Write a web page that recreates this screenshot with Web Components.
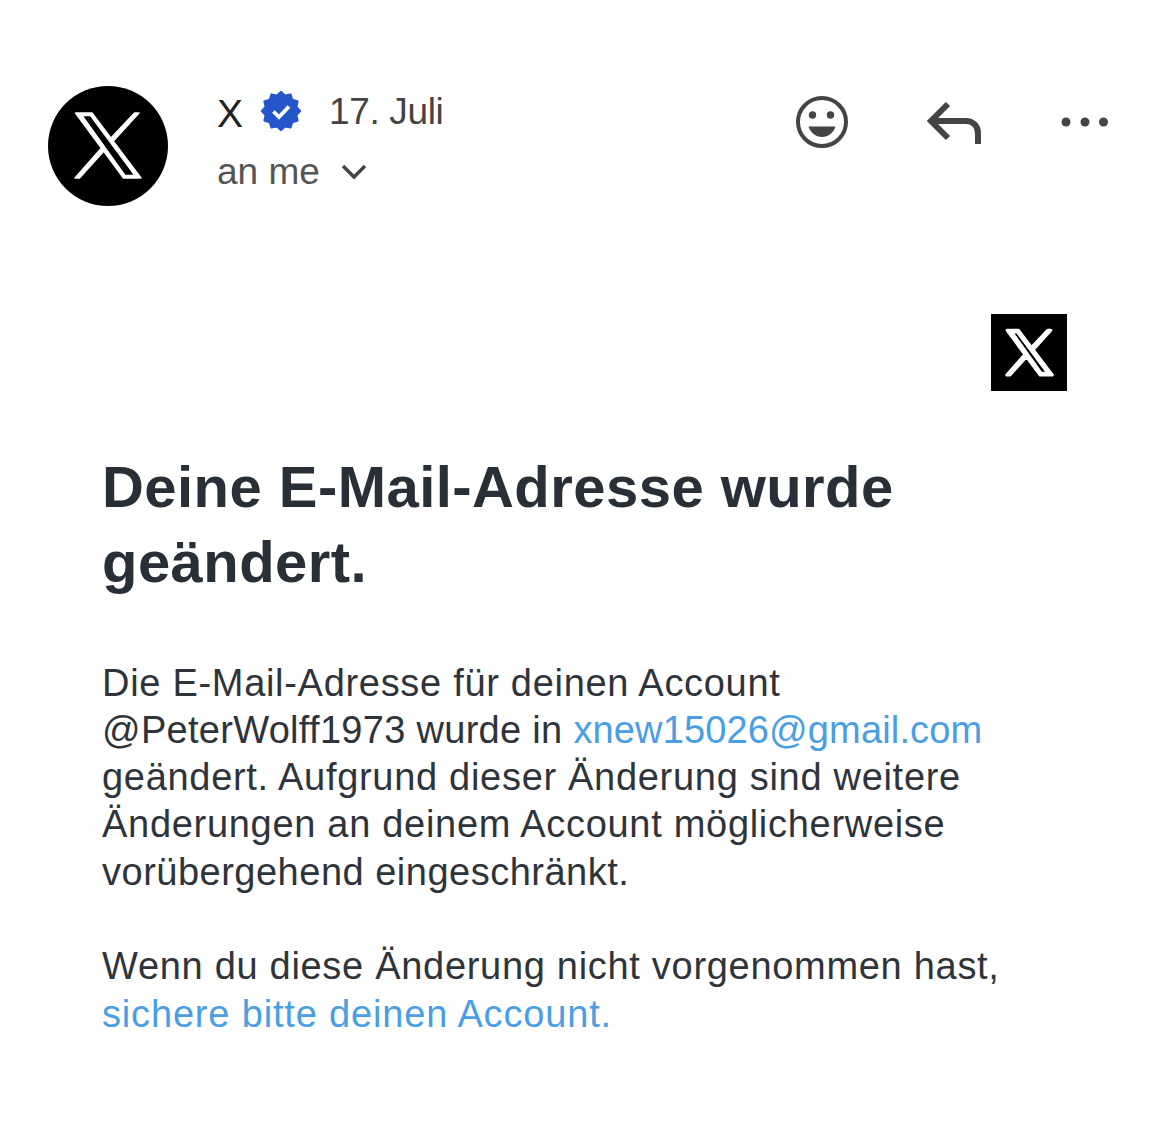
<!DOCTYPE html>
<html lang="de">
<head>
<meta charset="utf-8">
<title>Deine E-Mail-Adresse wurde geändert</title>
<style>
  html, body { margin: 0; background: #fff; }
  body { font-family: "Liberation Sans", Arial, sans-serif; }
</style>
</head>
<body>
<mail-view>
  <mail-header></mail-header>
  <mail-body></mail-body>
</mail-view>

<script>
// hollow band plus the two thin arms, drawn on an 80x84 box
const X_PATH = 'M7.5 9H24L73 74H55.500ZM14 11.500L57 71.500H67L22.500 11.500ZM66.500 9H71L45 37.500 42.500 34.500ZM33 44.500L35.500 47.500 11.500 74H7Z';

function badgePoints(cx, cy, r1, r2, n) {
  const pts = [];
  for (let i = 0; i < n * 2; i++) {
    const a = Math.PI * i / n - Math.PI / 2;
    const r = i % 2 ? r2 : r1;
    pts.push((cx + r * Math.cos(a)).toFixed(2) + ',' + (cy + r * Math.sin(a)).toFixed(2));
  }
  return pts.join(' ');
}

class MailView extends HTMLElement {
  constructor() {
    super();
    this.attachShadow({ mode: 'open' });
    this.shadowRoot.innerHTML = `
      <style>
        :host { display: block; width: 1170px; height: 1122px; overflow: hidden; background: #fff; }
      </style>
      <slot></slot>
    `;
  }
}

class XLogo extends HTMLElement {
  constructor() {
    super();
    this.attachShadow({ mode: 'open' });
    this.shadowRoot.innerHTML = `
      <style>
        :host { display: flex; align-items: center; justify-content: center; background: #000; flex: none; }
        svg { display: block; width: var(--mark-w, 80px); height: var(--mark-h, 84px); fill: #fff; stroke: #fff; stroke-width: var(--mark-bold, 0); stroke-linejoin: round; fill-rule: evenodd; }
      </style>
      <svg viewBox="0 0 80 84"><path d="${X_PATH}"/></svg>
    `;
  }
}

class MailHeader extends HTMLElement {
  constructor() {
    super();
    this.attachShadow({ mode: 'open' });
    this.shadowRoot.innerHTML = `
      <style>
        :host {
          display: flex;
          align-items: flex-start;
          padding: 86px 60px 0 48px;
          height: 120px;
          color: #444;
        }
        x-logo { width: 120px; height: 120px; border-radius: 50%; margin-right: 49px; --mark-bold: 1.400; }
        .who { flex: 1; padding-top: 3px; }
        .line1 { display: flex; align-items: center; height: 46px; font-size: 37px; letter-spacing: -.35px; }
        .name { color: #222; width: 44px; font-size: 39px; position: relative; top: 2px; }
        .badge { width: 42px; height: 42px; margin-right: 27px; margin-left: -1px; position: relative; top: -1px; }
        .line2 { display: flex; align-items: center; height: 50px; margin-top: 12px; font-size: 37px; color: #555; }
        .line2 svg { width: 28px; height: 18px; margin-left: 20px; }
        .actions { display: flex; align-items: center; margin-top: 10px; }
        .actions svg { display: block; }
        .smile { width: 52px; height: 52px; margin-right: 78px; }
        .reply { width: 56px; height: 44px; margin-right: 78px; }
        .more { width: 50px; height: 12px; }
      </style>
      <x-logo></x-logo>
      <div class="who">
        <div class="line1">
          <span class="name">X</span>
          <svg class="badge" viewBox="0 0 42 42">
            <polygon fill="#2456c9" stroke="#2456c9" stroke-width="1.500" stroke-linejoin="round" points="${badgePoints(21, 21, 19.5, 16.2, 12)}"/>
            <path d="M13.500 21.500l5.500 5.500 10-10.500" fill="none" stroke="#fff" stroke-width="3.800"/>
          </svg>
          <span>17. Juli</span>
        </div>
        <div class="line2">
          <span>an me</span>
          <svg viewBox="0 0 28 18"><path d="M3 3l11 11L25 3" fill="none" stroke="#444" stroke-width="3.400"/></svg>
        </div>
      </div>
      <div class="actions">
        <svg class="smile" viewBox="0 0 52 52">
          <circle cx="26" cy="26" r="24" fill="none" stroke="#444" stroke-width="4"/>
          <circle cx="16.500" cy="19" r="3.700" fill="#444"/>
          <circle cx="34.500" cy="19" r="3.700" fill="#444"/>
          <path d="M12.500 30.500h27c-2 6-7 10.500-13.500 10.500s-11.500-4.500-13.500-10.500z" fill="#444"/>
        </svg>
        <svg class="reply" viewBox="0 0 56 44">
          <path d="M22 4L5 21l17 17M6 21h34c7 0 12 5 12 12v11" fill="none" stroke="#444" stroke-width="6"/>
        </svg>
        <svg class="more" viewBox="0 0 50 12">
          <circle cx="6" cy="6" r="4.500" fill="#444"/>
          <circle cx="25" cy="6" r="4.500" fill="#444"/>
          <circle cx="43.500" cy="6" r="4.500" fill="#444"/>
        </svg>
      </div>
    `;
  }
}

class MailBody extends HTMLElement {
  constructor() {
    super();
    this.attachShadow({ mode: 'open' });
    this.shadowRoot.innerHTML = `
      <style>
        :host { display: block; padding: 108px 102px 0 102px; color: #2b3036; }
        .logo-row { display: flex; justify-content: flex-end; padding-right: 1px; }
        x-logo { width: 76px; height: 77px; --mark-w: 55px; --mark-h: 58px; --mark-bold: 4.500; }
        h1 { margin: 58px 0 0; font-size: 58px; line-height: 75px; font-weight: 700; letter-spacing: .45px; color: #292f36; }
        p { margin: 0; font-size: 38px; line-height: 47.300px; letter-spacing: .7px; color: #2f343a; white-space: nowrap; }
        .first { margin-top: 60.500px; }
        .second { margin-top: 47.500px; }
        a { color: #4a9ee3; text-decoration: none; }
        .tight { letter-spacing: .3px; }
        .mail { letter-spacing: .15px; }
        .mid { letter-spacing: .5px; }
        .wide { letter-spacing: .83px; }
      </style>
      <div class="logo-row"><x-logo></x-logo></div>
      <h1>Deine E-Mail-Adresse wurde<br>geändert.</h1>
      <p class="first">Die E-Mail-Adresse für deinen Account<br>
      <span class="tight">@PeterWolff1973 wurde in </span><a class="mail">xnew15026@gmail.com</a><br>
      geändert. Aufgrund dieser Änderung sind weitere<br>
      Änderungen an deinem Account möglicherweise<br>
      <span class="mid">vorübergehend eingeschränkt.</span></p>
      <p class="second">Wenn du diese Änderung nicht vorgenommen hast,<br>
      <a class="wide">sichere bitte deinen Account.</a></p>
    `;
  }
}

customElements.define('mail-view', MailView);
customElements.define('x-logo', XLogo);
customElements.define('mail-header', MailHeader);
customElements.define('mail-body', MailBody);
</script>
</body>
</html>
